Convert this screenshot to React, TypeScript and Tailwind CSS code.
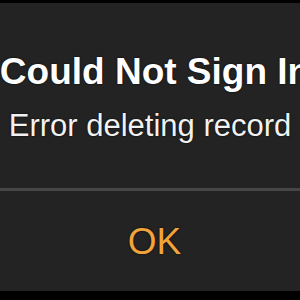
export default function App() {
  return (
    <div className="w-[300px] h-[300px] bg-black overflow-hidden flex flex-col" style={{ fontFamily: '"Liberation Sans", Arial, sans-serif' }}>
      <div className="h-[3px] shrink-0 bg-black" />
      <div className="h-[288px] shrink-0 bg-[#232323] flex flex-col overflow-hidden">
        <div className="mt-[50px] flex justify-center">
          <span className="shrink-0 ml-[10px] whitespace-nowrap text-[37px] leading-[37px] font-bold text-white [text-shadow:0_0_2px_#000]">
            Could Not Sign In
          </span>
        </div>
        <div className="mt-[20px] flex justify-center">
          <span className="shrink-0 whitespace-nowrap text-[31px] leading-[31px] text-[#f2f2f2] [text-shadow:0_0_2px_#000]">
            Error deleting record
          </span>
        </div>
        <div className="mt-[47px] h-[3px] bg-[#464646]" />
        <div className="mt-[32px] flex justify-center">
          <span className="ml-[9px] text-[37px] leading-[37px] text-[#f2a33a] [text-shadow:0_0_2px_#000]">
            OK
          </span>
        </div>
      </div>
    </div>
  );
}
